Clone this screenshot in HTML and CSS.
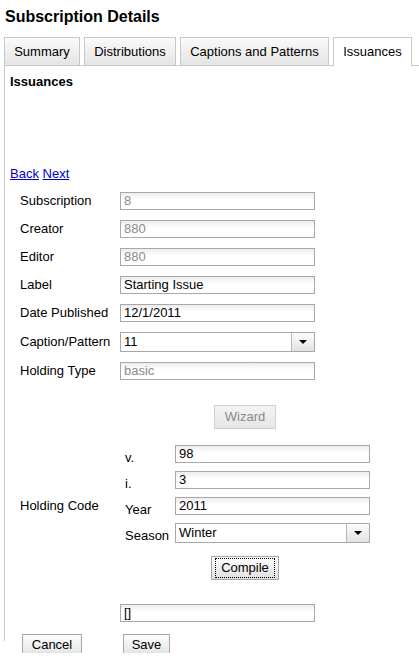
FILE: index.html
```html
<!DOCTYPE html>
<html>
<head>
<meta charset="utf-8">
<link rel="stylesheet" href="styles.css">
</head>
<body>
<div class="page">
  <h1 class="title">Subscription Details</h1>
  <div class="tabs">
    <div class="tab tab-summary">Summary</div>
    <div class="tab tab-dist">Distributions</div>
    <div class="tab tab-cap">Captions and Patterns</div>
    <div class="tab tab-iss tab-active">Issuances</div>
  </div>
  <div class="panel">
    <h2 class="heading">Issuances</h2>
    <div class="nav"><a href="#">Back</a> <a href="#">Next</a></div>
    <div class="form">
      <div class="label">Subscription</div>
      <div class="field"><div class="input disabled">8</div></div>
      <div class="label">Creator</div>
      <div class="field"><div class="input disabled">880</div></div>
      <div class="label">Editor</div>
      <div class="field"><div class="input disabled">880</div></div>
      <div class="label">Label</div>
      <div class="field"><div class="input">Starting Issue</div></div>
      <div class="label">Date Published</div>
      <div class="field"><div class="input">12/1/2011</div></div>
      <div class="label">Caption/Pattern</div>
      <div class="field"><div class="select"><span class="select-text">11</span><span class="arrow"></span></div></div>
      <div class="label">Holding Type</div>
      <div class="field"><div class="input disabled">basic</div></div>

      <div class="label hc-label">Holding Code</div>
      <div class="hc">
        <div class="btn-row wizard-row"><span class="btn btn-disabled">Wizard</span></div>
        <div class="sub">
          <div class="sub-label">v.</div>
          <div class="input wide">98</div>
          <div class="sub-label">i.</div>
          <div class="input wide">3</div>
          <div class="sub-label">Year</div>
          <div class="input wide">2011</div>
          <div class="sub-label">Season</div>
          <div class="select wide"><span class="select-text">Winter</span><span class="arrow"></span></div>
        </div>
        <div class="btn-row compile-row"><span class="btn btn-focus"><span class="focus-ring">Compile</span></span></div>
      </div>

      <div class="label"></div>
      <div class="field result"><div class="input">[]</div></div>
    </div>
    <div class="actions">
      <span class="btn btn-bottom btn-cancel">Cancel</span>
      <span class="btn btn-bottom btn-save">Save</span>
    </div>
  </div>
</div>
</body>
</html>
```
FILE: styles.css
```css
html, body {
  margin: 0;
  padding: 0;
  background: #fff;
}
body {
  font-family: "Liberation Sans", Arial, sans-serif;
  font-size: 13px;
  color: #000;
}
.page {
  width: 419px;
  height: 653px;
  overflow: hidden;
}
.title {
  margin: 8px 0 0 5px;
  font-size: 16px;
  line-height: 18px;
  font-weight: bold;
}
.tabs {
  display: flex;
  gap: 4px;
  margin: 11px 0 0 4px;
  border-bottom: 1px solid #c8c8c8;
  align-items: flex-end;
}
.tab {
  box-sizing: border-box;
  height: 28px;
  line-height: 27px;
  text-align: center;
  border: 1px solid #c8c8c8;
  border-bottom: none;
  background: linear-gradient(to bottom, #fafafa, #e4e4e4);
  color: #000;
  white-space: nowrap;
}
.tab-summary { width: 76px; }
.tab-dist { width: 92px; }
.tab-cap { width: 149px; }
.tab-iss { width: 79px; }
.tab-active {
  background: #fff;
  height: 29px;
  margin-bottom: -1px;
  position: relative;
}
.panel {
  margin-left: 4px;
  border-left: 1px solid #c8c8c8;
  height: 575px;
  padding-left: 5px;
}
.heading {
  margin: 0;
  padding-top: 8px;
  font-size: 13px;
  line-height: 15px;
  font-weight: bold;
}
.nav {
  margin-top: 77px;
  line-height: 15px;
}
.nav a {
  color: #0000cc;
  text-decoration: underline;
}
.form {
  display: grid;
  grid-template-columns: 100px 250px;
  row-gap: 10px;
  margin: 11px 0 0 10px;
  align-items: center;
}
.label {
  line-height: 18px;
}
.input {
  box-sizing: border-box;
  width: 195px;
  height: 18px;
  border: 1px solid #a8a8a8;
  background: linear-gradient(to bottom, #ededed 0, #fff 7px);
  line-height: 16px;
  padding-left: 3px;
  white-space: nowrap;
  overflow: hidden;
}
.input.disabled {
  color: #8c8c8c;
}
.select {
  box-sizing: border-box;
  width: 195px;
  height: 20px;
  border: 1px solid #a8a8a8;
  display: flex;
  background: #fff;
}
.select-text {
  flex: 1;
  line-height: 18px;
  padding-left: 3px;
}
.arrow {
  width: 22px;
  border-left: 1px solid #b8b8b8;
  background: linear-gradient(to bottom, #fcfcfc, #e2e2e2);
  display: flex;
  align-items: center;
  justify-content: center;
}
.arrow::after {
  content: "";
  width: 0;
  height: 0;
  border-left: 4px solid transparent;
  border-right: 4px solid transparent;
  border-top: 4px solid #000;
}
.hc-label {
  align-self: start;
  margin-top: 107px;
}
.hc {
  padding-top: 15px;
}
.btn-row {
  display: flex;
  justify-content: center;
}
.btn {
  display: inline-block;
  box-sizing: border-box;
  height: 24px;
  line-height: 22px;
  padding: 0 9px;
  border: 1px solid #a8a8a8;
  background: linear-gradient(to bottom, #fdfdfd, #e0e0e0);
  white-space: nowrap;
}
.btn-disabled {
  color: #8a8a8a;
  border-color: #cfcfcf;
  background: linear-gradient(to bottom, #f4f4f4, #e6e6e6);
  padding: 0 10px;
}
.wizard-row {
  margin-bottom: 16px;
}
.sub {
  display: grid;
  grid-template-columns: 50px 195px;
  row-gap: 8px;
  padding-left: 5px;
}
.sub-label {
  line-height: 18px;
  padding-top: 4px;
  height: 18px;
  box-sizing: border-box;
}
.compile-row {
  margin-top: 13px;
}
.btn-focus {
  padding: 1px 3px;
  line-height: 18px;
}
.focus-ring {
  display: block;
  border: 1px dotted #000;
  padding: 0 5px;
  line-height: 18px;
}
.result {
  margin-top: 14px;
}
.actions {
  display: flex;
  margin: 12px 0 0 12px;
}
.btn-bottom {
  text-align: center;
  padding: 3px 0 0;
  line-height: 14px;
}
.btn-cancel {
  width: 60px;
}
.btn-save {
  margin-left: 41px;
  width: 47px;
}
```
